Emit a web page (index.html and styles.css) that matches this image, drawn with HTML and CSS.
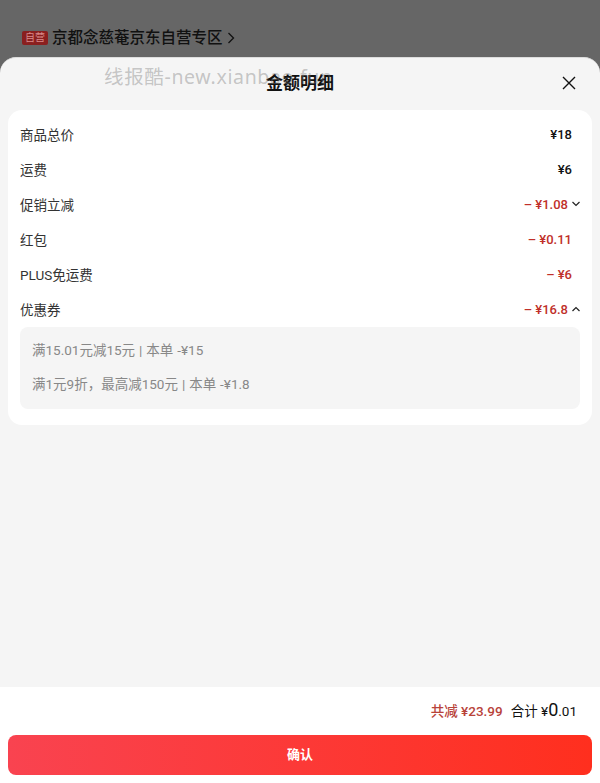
FILE: index.html
```html
<!DOCTYPE html>
<html lang="zh">
<head>
<meta charset="utf-8">
<title>金额明细</title>
<link rel="stylesheet" href="styles.css">
</head>
<body>
<div class="page">
  <header class="backdrop">
    <div class="shop">
      <span class="badge">自营</span>
      <span class="shop-name">京都念慈菴京东自营专区</span>
      <svg class="shop-arrow" width="8" height="12" viewBox="0 0 8 12"><path d="M1.5 1l5 5-5 5" fill="none" stroke="#111" stroke-width="1.3"/></svg>
    </div>
  </header>
  <main class="sheet">
    <div class="sheet-head">
      <h1 class="title">金额明细</h1>
      <svg class="close" width="16" height="16" viewBox="0 0 16 16"><path d="M2 2l12 12M14 2L2 14" stroke="#111" stroke-width="1.4" fill="none"/></svg>
    </div>
    <div class="watermark">线报酷-new.xianbao.fun</div>
    <section class="card">
      <div class="row"><span class="label">商品总价</span><span class="val">¥18</span></div>
      <div class="row"><span class="label">运费</span><span class="val">¥6</span></div>
      <div class="row"><span class="label">促销立减</span><span class="val red more">– ¥1.08<svg class="chev" width="10" height="6" viewBox="0 0 10 6"><path d="M1.5 1l3.5 3.5L8.5 1" fill="none" stroke="#222" stroke-width="1.2"/></svg></span></div>
      <div class="row"><span class="label">红包</span><span class="val red">– ¥0.11</span></div>
      <div class="row"><span class="label">PLUS免运费</span><span class="val red">– ¥6</span></div>
      <div class="row"><span class="label">优惠券</span><span class="val red more">– ¥16.8<svg class="chev" width="10" height="6" viewBox="0 0 10 6"><path d="M1.5 5L5 1.5 8.5 5" fill="none" stroke="#222" stroke-width="1.2"/></svg></span></div>
      <div class="coupons">
        <p class="coupon">满15.01元减15元 | 本单 -¥15</p>
        <p class="coupon">满1元9折，最高减150元 | 本单 -¥1.8</p>
      </div>
    </section>
  </main>
  <footer class="footer">
    <div class="totals">
      <span class="saved">共减 ¥23.99</span>
      <span class="sum">合计 ¥<b class="big">0</b>.01</span>
    </div>
    <button class="confirm">确认</button>
  </footer>
</div>
</body>
</html>
```
FILE: styles.css
```css
* { box-sizing: border-box; }
html, body { margin: 0; padding: 0; }
body {
  width: 600px;
  height: 783px;
  overflow: hidden;
  font-family: Roboto, "Noto Sans CJK SC", sans-serif;
  color: #1a1a1a;
  background: #666;
}
.page { display: flex; flex-direction: column; height: 783px; }
.backdrop {
  height: 57px;
  background: #666;
  padding: 28px 0 0 22px;
  flex: none;
}
.shop { display: flex; align-items: center; height: 20px; }
.badge {
  width: 26px;
  height: 14px;
  border-radius: 2px;
  background: #8a1f1f;
  color: #d98a8a;
  font-size: 10px;
  line-height: 14px;
  text-align: center;
  margin-right: 4px;
}
.shop-name { font-size: 15.5px; font-weight: 500; color: #111; line-height: 20px; }
.shop-arrow { margin-left: 4px; }
.sheet {
  position: relative;
  flex: 1;
  background: #f5f5f5;
  border-top: 1px solid #ddd;
  border-radius: 16px 16px 0 0;
  padding: 0 8px;
  min-height: 0;
}
.sheet-head {
  position: relative;
  height: 52px;
  display: flex;
  align-items: center;
  justify-content: center;
}
.title { margin: 0 0 2px; font-size: 17px; font-weight: 700; color: #111; line-height: 50px; }
.close { position: absolute; right: 15px; top: 17px; }
.watermark {
  position: absolute;
  left: 104px;
  top: 5px;
  font-family: "Noto Sans", "Noto Sans CJK SC", sans-serif;
  font-size: 19.5px;
  line-height: 28px;
  letter-spacing: 0.65px;
  color: rgba(120, 120, 120, 0.4);
  white-space: nowrap;
}
.card {
  background: #fff;
  border-radius: 14px;
  padding: 7px 12px 16px;
}
.row {
  height: 35px;
  display: flex;
  justify-content: space-between;
  align-items: center;
  font-size: 13.5px;
  color: #333;
}
.label { padding-bottom: 2px; }
.val {
  display: flex;
  align-items: center;
  font-size: 13px;
  font-weight: 500;
  white-space: pre;
  color: #111;
  padding-right: 8px;
  position: relative;
}
.more { padding-right: 12px; }
.red { color: #c0302a; }
.chev { position: absolute; right: -1px; top: 50%; margin-top: -4px; }
.coupons {
  background: #f5f5f5;
  border-radius: 8px;
  padding: 7px 12px;
  height: 82px;
}
.coupon {
  margin: 0;
  height: 34px;
  line-height: 33px;
  font-size: 13.5px;
  word-spacing: 0.6px;
  color: #888;
}
.footer {
  flex: none;
  height: 96px;
  background: #fff;
  padding: 0 8px;
}
.totals {
  height: 48px;
  display: flex;
  justify-content: flex-end;
  align-items: center;
  gap: 8px;
  padding: 0 15px 3px 0;
}
.saved { font-size: 13.5px; color: #b8433a; font-weight: 500; }
.sum { font-size: 13.5px; color: #111; }
.big { font-size: 18px; font-weight: 400; }
.confirm {
  display: block;
  width: 100%;
  height: 40px;
  border: 0;
  border-radius: 8px;
  padding: 0 0 3px;
  background: linear-gradient(90deg, #f94350, #ff2f1e);
  color: #fff;
  font-family: inherit;
  font-size: 13px;
  font-weight: 700;
}
```
